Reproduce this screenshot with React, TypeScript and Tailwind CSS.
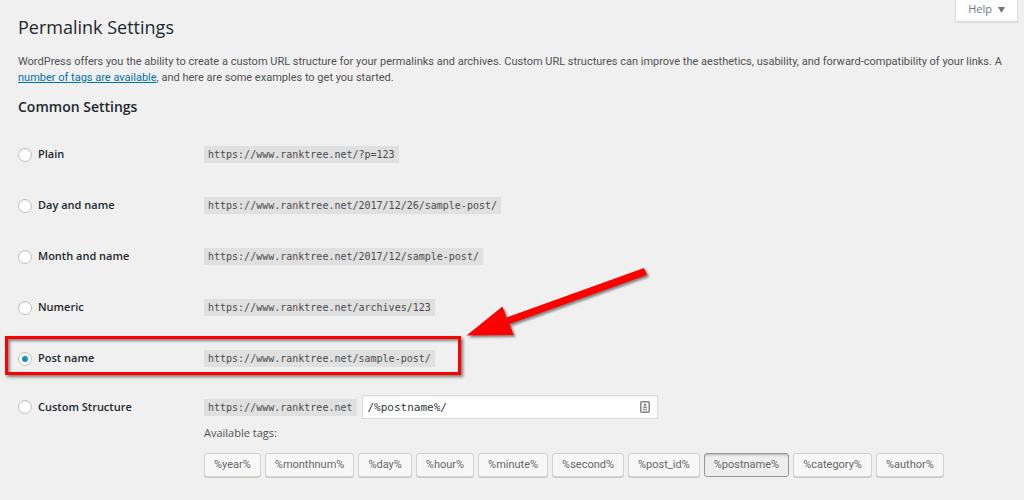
import React, { useState } from "react";

interface PermalinkOption {
    id: string;
    label: string;
    example: string;
}

interface TagButtonProps {
    tag: string;
    active: boolean;
    onClick: () => void;
}

const SITE_URL = "https://www.ranktree.net";

const OPTIONS: PermalinkOption[] = [
    { id: "plain", label: "Plain", example: "/?p=123" },
    { id: "day", label: "Day and name", example: "/2017/12/26/sample-post/" },
    { id: "month", label: "Month and name", example: "/2017/12/sample-post/" },
    { id: "numeric", label: "Numeric", example: "/archives/123" },
    { id: "postname", label: "Post name", example: "/sample-post/" },
];

const TAGS = ["year", "monthnum", "day", "hour", "minute", "second", "post_id", "postname", "category", "author"];

const Code: React.FC<{ children: React.ReactNode }> = ({ children }) => (
    <code className="h-[17px] shrink-0 bg-[#e0e0e0] px-1 font-['DejaVu_Sans_Mono',monospace] text-[10px] leading-[17px] text-[#4c4c4c]">
        {children}
    </code>
);

const Radio: React.FC<{ id: string; checked: boolean; onChange: () => void }> = ({ id, checked, onChange }) => (
    <input
        type="radio"
        name="selection"
        id={id}
        checked={checked}
        onChange={onChange}
        className="grid size-[14px] shrink-0 appearance-none place-items-center rounded-full border border-[#bfc2c6] bg-white shadow-[inset_0_1px_1px_rgba(0,0,0,0.07)] before:size-[6px] before:rounded-full checked:before:bg-[#1e8cbe]"
    />
);

const TagButton: React.FC<TagButtonProps> = ({ tag, active, onClick }) => (
    <button
        type="button"
        aria-pressed={active}
        onClick={onClick}
        className={
            active
                ? "h-6 rounded-[3px] border border-[#999] bg-[#eee] px-[9px] pt-px font-[Roboto,sans-serif] text-[11px] text-[#666] shadow-[inset_0_2px_3px_-2px_rgba(0,0,0,0.5)]"
                : "h-6 rounded-[3px] border border-[#d2d2d2] bg-[#f7f7f7] px-[9px] font-[Roboto,sans-serif] text-[11px] text-[#666] shadow-[0_1px_0_#ccc]"
        }
    >
        %{tag}%
    </button>
);

// Frame around the recommended option
const Highlight = () => (
    <div className="pointer-events-none absolute top-[3px] -left-[13px] h-[39px] w-[456px] border-[3px] border-[#fe0000] shadow-[2px_2px_3px_rgba(0,0,0,0.5),inset_2px_2px_3px_rgba(0,0,0,0.45)]" />
);

const Arrow = () => (
    <svg
        className="pointer-events-none absolute -top-[67px] left-[446px] h-[76px] w-[190px] overflow-visible"
        viewBox="0 0 190 76"
        aria-hidden="true"
    >
        <polygon
            points="2.5,69.5 38.5,40.5 42.5,51.5 180,2 183,9 45.5,58 49.5,69"
            fill="#fe0000"
            className="drop-shadow-[2px_2px_1px_rgba(0,0,0,0.45)]"
        />
    </svg>
);

const FieldIcon = () => (
    <svg className="pointer-events-none absolute top-[6px] right-2 h-3 w-[10px]" viewBox="0 0 10 12" aria-hidden="true">
        <rect x="0.75" y="0.75" width="8.5" height="10.5" rx="1" fill="#f2f2f2" stroke="#858585" strokeWidth="1.5" />
        <circle cx="5" cy="3.8" r="1.1" fill="#777" />
        <path d="M3.2 7.2V6.1c0-.8 3.6-.8 3.6 0v1.1zM3 8.2h4v1H3z" fill="#888" />
    </svg>
);

const App: React.FC = () => {
    const [selected, setSelected] = useState("postname");
    const [structure, setStructure] = useState("/%postname%/");

    const toggleTag = (tag: string) => {
        const token = `%${tag}%`;
        setStructure(structure.includes(token) ? structure.replace(`${token}/`, "") : `${structure}${token}/`);
        setSelected("custom");
    };

    return (
        <div className="relative min-h-screen bg-[#f0f0f0] pr-5 pl-[18px] font-['Open_Sans','Noto_Sans',sans-serif] text-[11px] text-[#505050]">
            <button
                type="button"
                className="absolute top-0 right-[6px] flex h-[22px] items-center gap-[6px] border border-t-0 border-[#ddd] bg-white px-3 pb-[2px] text-[11px] text-[#72777c] shadow-[0_1px_1px_rgba(0,0,0,0.06)]"
            >
                Help
                <svg className="h-[6px] w-[7px]" viewBox="0 0 7 6" aria-hidden="true">
                    <path d="M0 0h7L3.5 6z" fill="#72777c" />
                </svg>
            </button>

            <h1 className="pt-4 text-[18px] leading-[22px] text-[#23282d]">Permalink Settings</h1>
            <p className="mt-4 font-[Roboto,sans-serif] leading-4">
                WordPress offers you the ability to create a custom URL structure for your permalinks and archives. Custom
                URL structures can improve the aesthetics, usability, and forward-compatibility of your links. A{" "}
                <a href="#tags" className="text-[#0073aa] underline">
                    number of tags are available
                </a>
                , and here are some examples to get you started.
            </p>
            <h2 className="mt-[11px] text-[14px] leading-[20px] font-semibold text-[#23282d]">Common Settings</h2>

            <form className="mt-3">
                {OPTIONS.map((option) => (
                    <div key={option.id} className="relative flex h-[51px] items-center">
                        <div className="flex w-[186px] shrink-0 items-center gap-[6px]">
                            <Radio
                                id={option.id}
                                checked={selected === option.id}
                                onChange={() => setSelected(option.id)}
                            />
                            <label htmlFor={option.id} className="font-semibold text-[#23282d]">
                                {option.label}
                            </label>
                        </div>
                        <Code>
                            {SITE_URL}
                            {option.example}
                        </Code>
                        {option.id === "postname" && (
                            <>
                                <Highlight />
                                <Arrow />
                            </>
                        )}
                    </div>
                ))}

                <div className="flex pt-[11px]">
                    <div className="flex h-6 w-[186px] shrink-0 items-center gap-[6px]">
                        <Radio id="custom" checked={selected === "custom"} onChange={() => setSelected("custom")} />
                        <label htmlFor="custom" className="font-semibold text-[#23282d]">
                            Custom Structure
                        </label>
                    </div>
                    <div className="min-w-0">
                        <div className="flex items-center gap-[5px]">
                            <Code>{SITE_URL}</Code>
                            <div className="relative w-full max-w-[296px]">
                                <input
                                    type="text"
                                    aria-label="Custom structure"
                                    value={structure}
                                    onChange={(e) => setStructure(e.target.value)}
                                    className="block h-6 w-full border border-[#ddd] bg-white px-[5px] font-['DejaVu_Sans_Mono',monospace] text-[11px] text-[#32373c] shadow-[inset_0_1px_2px_rgba(0,0,0,0.07)]"
                                />
                                <FieldIcon />
                            </div>
                        </div>
                        <p className="mt-[6px] leading-4">Available tags:</p>
                        <div className="mt-3 flex flex-wrap gap-1">
                            {TAGS.map((tag) => (
                                <TagButton
                                    key={tag}
                                    tag={tag}
                                    active={structure.includes(`%${tag}%`)}
                                    onClick={() => toggleTag(tag)}
                                />
                            ))}
                        </div>
                    </div>
                </div>
            </form>
        </div>
    );
};

export default App;
